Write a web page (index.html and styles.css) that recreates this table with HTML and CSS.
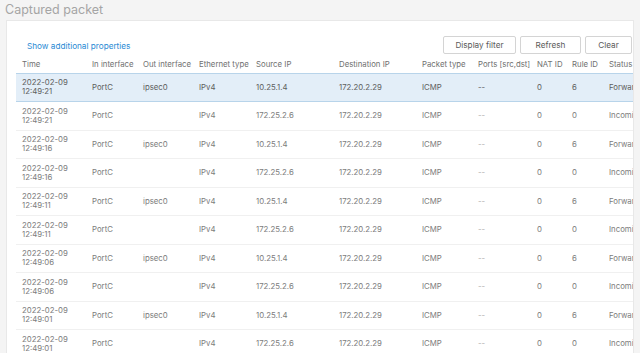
FILE: index.html
```html
<!DOCTYPE html>
<html lang="en">
<head>
    <meta charset="UTF-8">
    <title>Captured packet</title>
    <link rel="stylesheet" href="styles.css">
</head>
<body>
    <h2 class="page-title">Captured packet</h2>
    <div class="panel">
        <div class="toolbar">
            <a href="#" class="props-link">Show additional properties</a>
            <div class="actions">
                <button class="btn btn-filter">Display filter</button>
                <button class="btn btn-refresh">Refresh</button>
                <button class="btn btn-clear">Clear</button>
            </div>
        </div>
        <div class="table-scroll">
            <table class="packets">
                <colgroup>
                    <col style="width:70px"><col style="width:51px"><col style="width:56px"><col style="width:57px">
                    <col style="width:83px"><col style="width:83px"><col style="width:56px"><col style="width:59px">
                    <col style="width:35px"><col style="width:37px"><col style="width:80px">
                </colgroup>
                <thead>
                    <tr>
                        <th>Time</th><th>In interface</th><th>Out interface</th><th>Ethernet type</th>
                        <th>Source IP</th><th>Destination IP</th><th>Packet type</th><th>Ports [src,dst]</th>
                        <th>NAT ID</th><th>Rule ID</th><th>Status</th>
                    </tr>
                </thead>
                <tbody id="rows"></tbody>
            </table>
        </div>
    </div>

    <script>
        const times = ['12:49:21', '12:49:16', '12:49:11', '12:49:06', '12:49:01'];
        const body = document.getElementById('rows');
        let html = '';
        times.forEach((t, i) => {
            html += `<tr class="${i === 0 ? 'selected' : ''}">
                <td>2022-02-09<br>${t}</td><td>PortC</td><td>ipsec0</td><td>IPv4</td>
                <td>10.25.1.4</td><td>172.20.2.29</td><td>ICMP</td><td class="dim">--</td>
                <td>0</td><td>6</td><td>Forwarded</td></tr>`;
            html += `<tr>
                <td>2022-02-09<br>${t}</td><td>PortC</td><td></td><td>IPv4</td>
                <td>172.25.2.6</td><td>172.20.2.29</td><td>ICMP</td><td class="dim">--</td>
                <td>0</td><td>0</td><td>Incoming</td></tr>`;
        });
        body.innerHTML = html;
    </script>
</body>
</html>
```

FILE: styles.css
```css
* {
    margin: 0;
    padding: 0;
    box-sizing: border-box;
}

body {
    font-family: Inter, 'Noto Sans', sans-serif;
    background: #f4f4f4;
    color: #777;
    padding: 2px 6px 0 6px;
    overflow: hidden;
    height: 353px;
}

.page-title {
    font-size: 12.5px;
    font-weight: 400;
    color: #a5a5a5;
    line-height: 16px;
    margin-bottom: 2px;
    margin-left: -1px;
}

.panel {
    background: #fff;
    border: 1px solid #e8e8e8;
    padding: 15px 0 0 9px;
    overflow: hidden;
}

.toolbar {
    display: flex;
    justify-content: space-between;
    align-items: center;
    padding-right: 1px;
    height: 18px;
}

.props-link {
    color: #2a8ad4;
    font-size: 8.2px;
    text-decoration: none;
    margin-left: 11px;
    margin-top: 1px;
}

.actions {
    display: flex;
    gap: 4px;
}

.btn {
    font-family: inherit;
    font-size: 8.2px;
    color: #5a5a5a;
    background: #fff;
    border: 1px solid #d4d4d4;
    border-radius: 2px;
    height: 18px;
}

.btn-filter { width: 73px; }
.btn-refresh { width: 61px; }
.btn-clear { width: 47px; }

.table-scroll {
    overflow: hidden;
    margin-top: 3px;
}

.packets {
    table-layout: fixed;
    border-collapse: collapse;
    width: 667px;
    font-size: 7.8px;
}

.packets th {
    font-weight: 400;
    color: #707070;
    text-align: left;
    padding: 0 0 2px 6px;
    height: 16px;
    white-space: nowrap;
    vertical-align: middle;
}

.packets td {
    height: 28.5px;
    padding: 0 0 0 6px;
    line-height: 9px;
    color: #7c7c7c;
    border-bottom: 1.5px solid #f0f0f0;
    white-space: nowrap;
    overflow: hidden;
    vertical-align: middle;
}

.packets td.dim {
    color: #b0b0b0;
}

.packets tr.selected td {
    background: #e3eef8;
    border-bottom: 1.5px solid #b8d4ea;
    color: #5e5e5e;
}

.packets thead tr {
    border-bottom: 1.5px solid #b8d4ea;
}
```
